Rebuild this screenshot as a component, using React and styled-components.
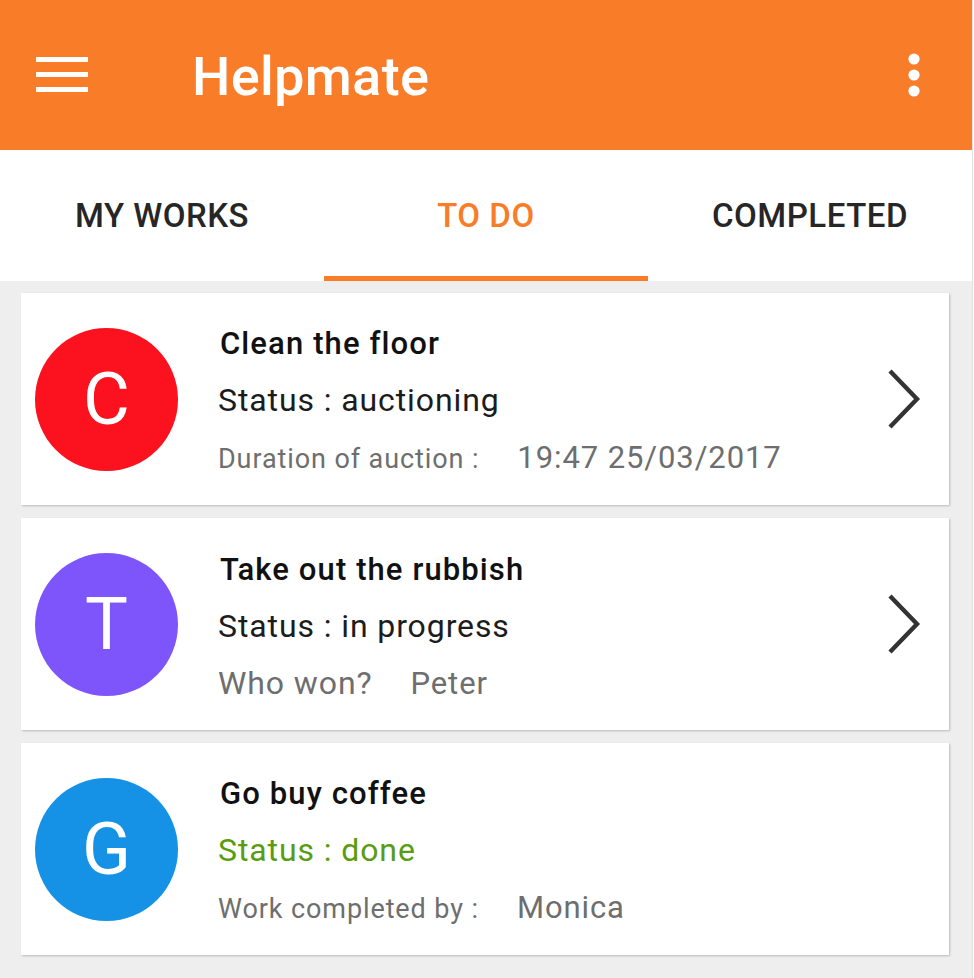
import styled, { createGlobalStyle } from 'styled-components'

const GlobalStyle = createGlobalStyle`
    body {
        margin: 0;
        background: #ffffff;
        font-family: Roboto, "Noto Sans", sans-serif;
    }
`

const medium = `"Roboto Medium", Roboto, "Noto Sans", sans-serif`

const Page = styled.div`
    width: 972px;
    min-height: 978px;
    background: #eeeeee;
    border-right: 1px solid #e2e2e2;
    display: flex;
    flex-direction: column;
`

const Toolbar = styled.header`
    height: 150px;
    background: #f97c28;
    display: flex;
    align-items: center;
    padding: 0 52px 0 36px;
    color: #ffffff;
`

const Title = styled.h1`
    margin: 0 0 0 104px;
    flex: 1;
    font-family: ${medium};
    font-size: 54px;
    font-weight: 500;
    line-height: 150px;
    padding-top: 4px;
    letter-spacing: 0.3px;
`

const IconButton = styled.div`
    display: flex;
    align-items: center;
    justify-content: center;
`

const TabBar = styled.nav`
    display: grid;
    grid-template-columns: repeat(3, 1fr);
    background: #ffffff;
    height: 131px;
`

const Tab = styled.div`
    display: flex;
    align-items: center;
    justify-content: center;
    padding-top: 4px;
    font-family: ${medium};
    font-size: 33px;
    font-weight: 500;
    letter-spacing: 0.5px;
    color: ${p => (p.$active ? '#f97c28' : '#262626')};
    border-bottom: 5px solid ${p => (p.$active ? '#f97c28' : 'transparent')};
`

const List = styled.main`
    display: flex;
    flex-direction: column;
    gap: 13px;
    padding: 12px 23px 20px 21px;
`

const Card = styled.div`
    height: 212px;
    background: #ffffff;
    box-shadow: 1px 1px 2px rgba(0, 0, 0, 0.22);
    display: flex;
    align-items: center;
    padding: 0 28px 0 14px;
    box-sizing: border-box;
`

const Avatar = styled.div`
    width: 143px;
    height: 143px;
    border-radius: 50%;
    background: ${p => p.$color};
    color: #ffffff;
    font-size: 72px;
    display: flex;
    align-items: center;
    justify-content: center;
    flex-shrink: 0;
`

const Info = styled.div`
    flex: 1;
    margin-left: 40px;
    padding-top: 5px;
    display: flex;
    flex-direction: column;
    letter-spacing: 0.9px;
`

const TaskName = styled.div`
    font-family: ${medium};
    font-size: 31px;
    font-weight: 500;
    line-height: 57px;
    color: #111111;
    padding-left: 2px;
    letter-spacing: 1.1px;
`

const Status = styled.div`
    font-size: 32px;
    line-height: 57px;
    color: ${p => (p.$done ? '#5a9c0f' : '#1c1c1c')};
`

const Detail = styled.div`
    font-size: 31px;
    line-height: 57px;
    color: #6e6e6e;
    white-space: nowrap;
`

const Label = styled.span`
    font-size: ${p => p.$size || 27}px;
`

const Value = styled.span`
    margin-left: ${p => p.$gap || 38}px;
`

const Chevron = () => (
    <svg width="34" height="62" viewBox="0 0 34 62">
        <polyline points="3,3 30,31 3,59" fill="none" stroke="#333333" strokeWidth="4.4" />
    </svg>
)

const Menu = () => (
    <svg width="52" height="36" viewBox="0 0 52 36">
        <rect x="0" y="0" width="52" height="5" fill="#fff" />
        <rect x="0" y="15" width="52" height="5" fill="#fff" />
        <rect x="0" y="30" width="52" height="5" fill="#fff" />
    </svg>
)

const More = () => (
    <svg width="12" height="44" viewBox="0 0 12 44">
        <circle cx="6" cy="6" r="5.6" fill="#fff" />
        <circle cx="6" cy="22" r="5.6" fill="#fff" />
        <circle cx="6" cy="38" r="5.6" fill="#fff" />
    </svg>
)

const tasks = [
    { letter: 'C', color: '#fc111f', name: 'Clean the floor', status: 'auctioning', label: 'Duration of auction :', value: '19:47 25/03/2017', arrow: true },
    { letter: 'T', color: '#7d55fb', name: 'Take out the rubbish', status: 'in progress', label: 'Who won?', labelSize: 32, value: 'Peter', gap: 38, arrow: true },
    { letter: 'G', color: '#1592e6', name: 'Go buy coffee', status: 'done', done: true, label: 'Work completed by :', value: 'Monica', arrow: false },
]

const App = () => {
    return (
        <Page>
            <GlobalStyle />
            <Toolbar>
                <IconButton><Menu /></IconButton>
                <Title>Helpmate</Title>
                <IconButton><More /></IconButton>
            </Toolbar>
            <TabBar>
                <Tab>MY WORKS</Tab>
                <Tab $active>TO DO</Tab>
                <Tab>COMPLETED</Tab>
            </TabBar>
            <List>
                {tasks.map(t => (
                    <Card key={t.name}>
                        <Avatar $color={t.color}>{t.letter}</Avatar>
                        <Info>
                            <TaskName>{t.name}</TaskName>
                            <Status $done={t.done}>Status : {t.status}</Status>
                            <Detail>
                                <Label $size={t.labelSize}>{t.label}</Label>
                                <Value $gap={t.gap}>{t.value}</Value>
                            </Detail>
                        </Info>
                        {t.arrow && <Chevron />}
                    </Card>
                ))}
            </List>
        </Page>
    )
}

export default App
